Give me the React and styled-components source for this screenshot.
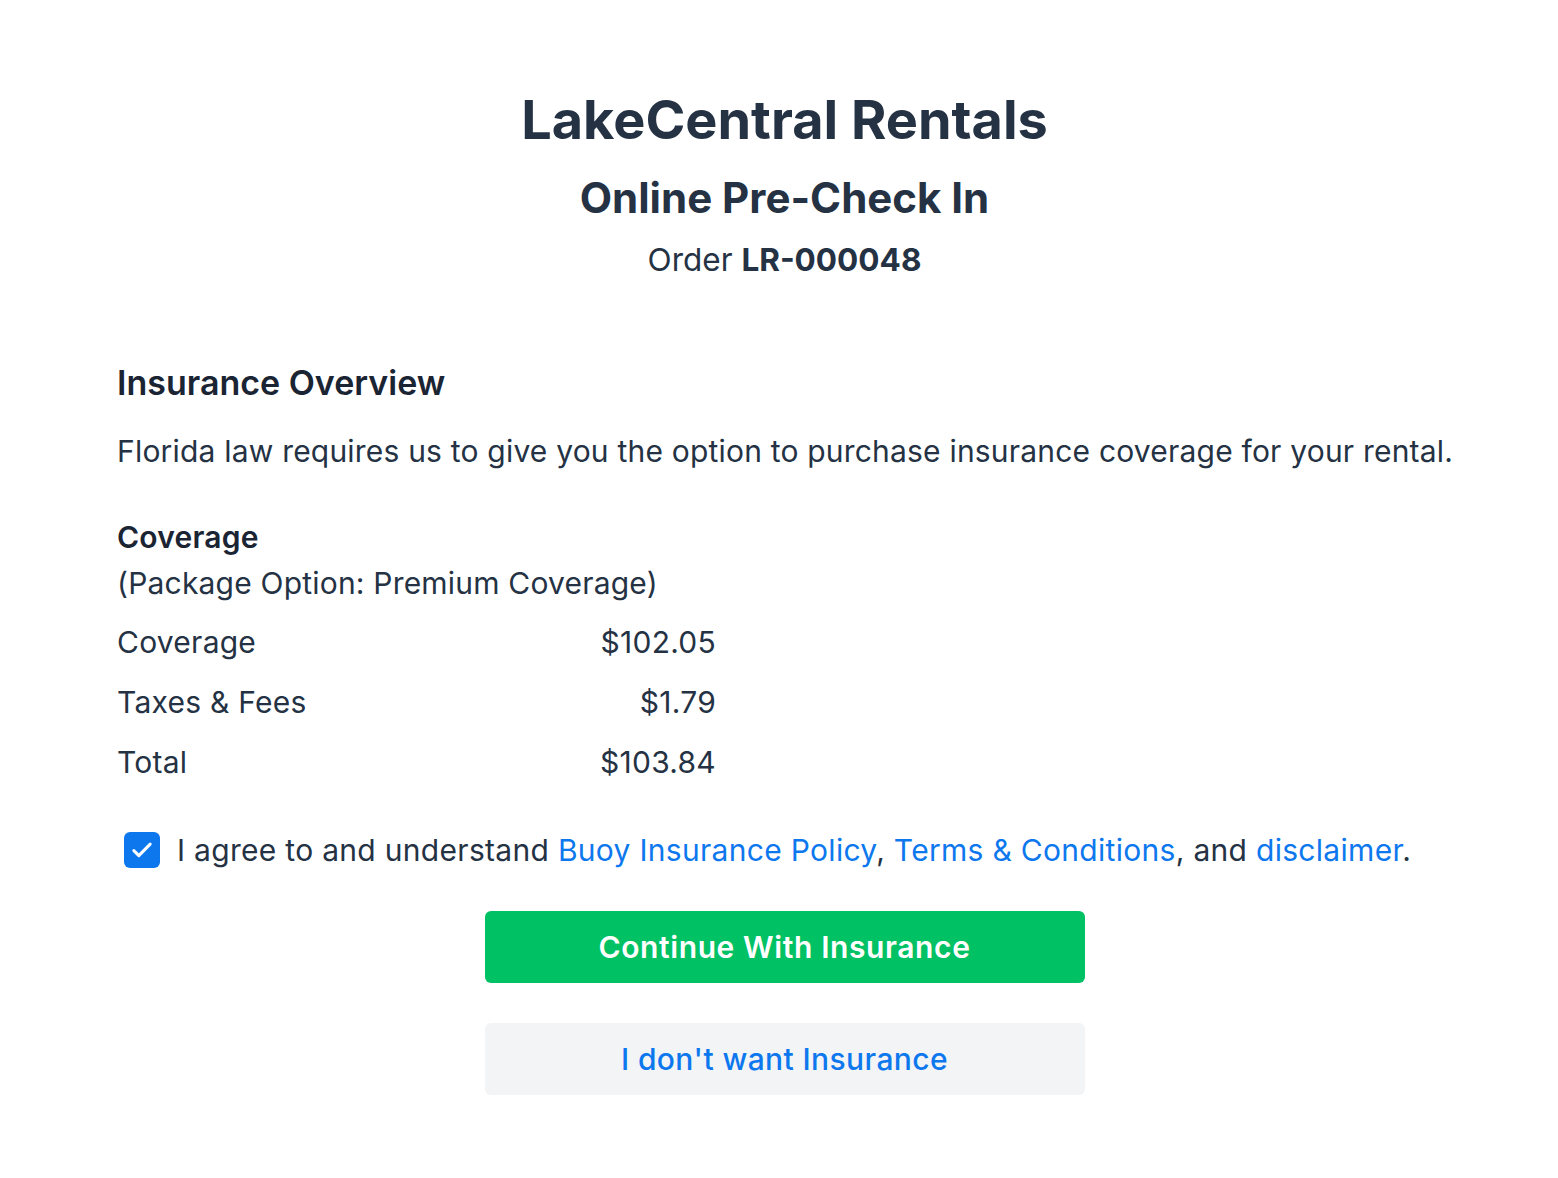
import styled, { createGlobalStyle } from 'styled-components';

const GlobalStyle = createGlobalStyle`
	html, body {
		margin: 0;
		padding: 0;
		background: #ffffff;
	}
	body {
		font-family: Inter, "Noto Sans", "Liberation Sans", sans-serif;
		color: #1f2937;
		-webkit-font-smoothing: antialiased;
	}
`;

const rows = [
	{ label: 'Coverage', value: '$102.05' },
	{ label: 'Taxes & Fees', value: '$1.79' },
	{ label: 'Total', value: '$103.84' },
];

const App = () => {
	return (
		<Page>
			<GlobalStyle />
			<Header>
				<Title>LakeCentral Rentals</Title>
				<Subtitle>Online Pre-Check In</Subtitle>
				<OrderLine>
					Order <strong>LR-000048</strong>
				</OrderLine>
			</Header>

			<Section>
				<SectionTitle>Insurance Overview</SectionTitle>
				<Body>Florida law requires us to give you the option to purchase insurance coverage for your rental.</Body>

				<CoverageBlock>
					<CoverageTitle>Coverage</CoverageTitle>
					<Body>(Package Option: Premium Coverage)</Body>
					<PriceTable>
						{rows.map(row => (
							<PriceRow key={row.label}>
								<span>{row.label}</span>
								<span>{row.value}</span>
							</PriceRow>
						))}
					</PriceTable>
				</CoverageBlock>

				<Agree>
					<CheckBox>
						<svg width="28" height="28" viewBox="0 0 24 24" fill="none">
							<path d="M5 12.5l4.3 4.3L19 7" stroke="#fff" strokeWidth="2.6" strokeLinecap="round" strokeLinejoin="round" />
						</svg>
					</CheckBox>
					<AgreeText>
						I agree to and understand <Link href="#">Buoy Insurance Policy</Link>,{' '}
						<Link href="#">Terms &amp; Conditions</Link>, and <Link href="#">disclaimer</Link>.
					</AgreeText>
				</Agree>

				<Actions>
					<Button primary>Continue With Insurance</Button>
					<Button>I don't want Insurance</Button>
				</Actions>
			</Section>
		</Page>
	);
};

const Page = styled.div`
	padding: 88px 100px 80px 117px;
`;

const Header = styled.header`
	display: flex;
	flex-direction: column;
	align-items: center;
	padding-right: 6px;
	color: #243244;
`;

const Title = styled.h1`
	margin: 0;
	font-size: 54px;
	line-height: 64px;
	font-weight: 700;
`;

const Subtitle = styled.h2`
	margin: 20px 0 0;
	font-size: 42px;
	line-height: 52px;
	font-weight: 700;
`;

const OrderLine = styled.div`
	margin-top: 16px;
	font-size: 31.5px;
	line-height: 40px;

	strong {
		font-weight: 700;
	}
`;

const Section = styled.section`
	margin-top: 81px;
`;

const SectionTitle = styled.h3`
	margin: 0 0 24px;
	font-size: 34px;
	line-height: 44px;
	font-weight: 600;
	color: #1a2433;
`;

const Body = styled.p`
	margin: 0;
	font-size: 30px;
	line-height: 44px;
	letter-spacing: 0.2px;
	color: #243244;
`;

const CoverageBlock = styled.div`
	margin-top: 40px;
`;

const CoverageTitle = styled.div`
	font-size: 30px;
	line-height: 48px;
	font-weight: 600;
	letter-spacing: 0.2px;
	color: #1a2433;
`;

const PriceTable = styled.div`
	width: 599px;
	margin-top: 7px;
`;

const PriceRow = styled.div`
	display: flex;
	justify-content: space-between;
	font-size: 30px;
	line-height: 60px;
	letter-spacing: 0.25px;
	color: #243244;
`;

const Agree = styled.div`
	display: flex;
	align-items: center;
	gap: 17px;
	margin-top: 36px;
	padding-left: 7px;
`;

const CheckBox = styled.span`
	display: flex;
	align-items: center;
	justify-content: center;
	width: 36px;
	height: 36px;
	border-radius: 6px;
	background: #0d78ee;
	flex-shrink: 0;
`;

const AgreeText = styled.div`
	font-size: 30px;
	line-height: 44px;
	letter-spacing: 0.3px;
	color: #243244;
`;

const Link = styled.a`
	color: #0d78ee;
	text-decoration: none;
`;

const Actions = styled.div`
	display: flex;
	flex-direction: column;
	align-items: center;
	gap: 40px;
	margin-top: 39px;
	padding-right: 6px;
`;

const Button = styled.button`
	width: 600px;
	height: 72px;
	border: none;
	border-radius: 6px;
	font-family: inherit;
	font-size: 30px;
	font-weight: ${props => (props.primary ? 600 : 500)};
	letter-spacing: ${props => (props.primary ? '0.6px' : '0.4px')};
	color: ${props => (props.primary ? '#ffffff' : '#0d78ee')};
	background: ${props => (props.primary ? '#00c163' : '#f3f4f6')};
	cursor: pointer;
`;

export default App;
